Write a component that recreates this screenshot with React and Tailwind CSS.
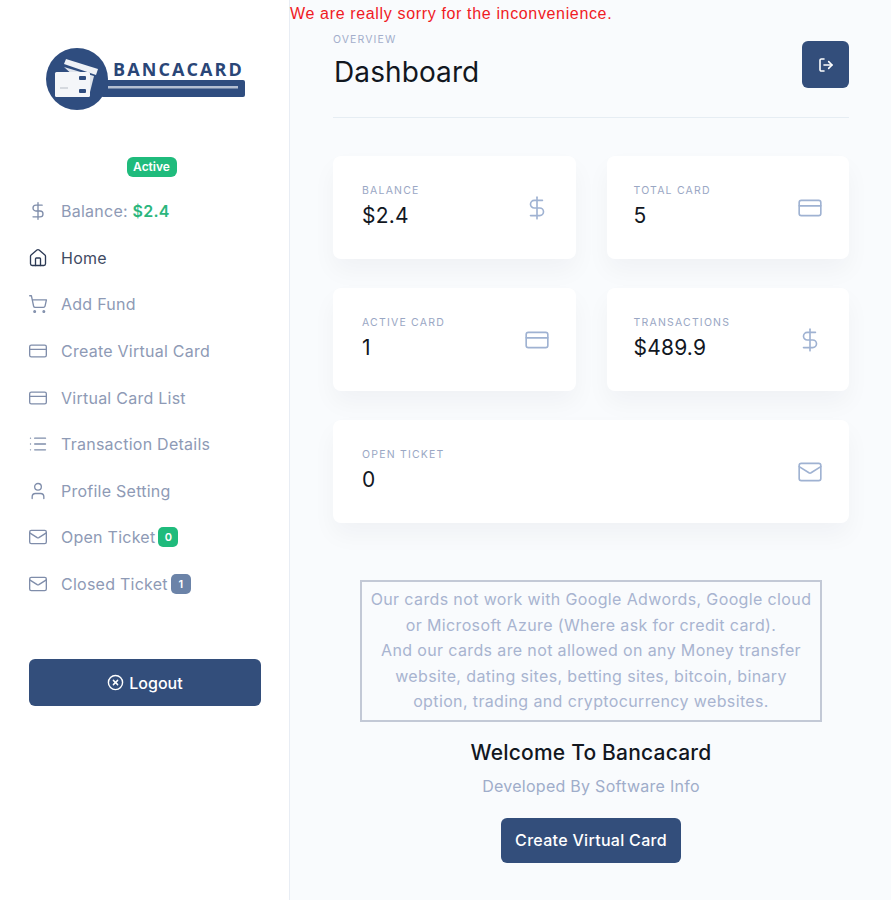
import React from "react";
import { Home, ShoppingCart, CreditCard, List, User, Mail, DollarSign, XCircle, LogOut } from "lucide-react";

function Logo() {
  return (
    <div className="relative w-[200px] h-[62px]">
      <svg width="200" height="62" viewBox="0 0 200 62" className="block">
        <rect x="55" y="32" width="144" height="17" rx="2" fill="#2f4d7f" />
        <rect x="62" y="38" width="130" height="2.5" fill="#b4bfd2" />
        <circle cx="31" cy="31" r="31" fill="#2f4d7f" />
        <path d="M20 11 L52 21 L50 27 L18 16 Z" fill="#eef1f6" />
        <path d="M18 19 L48 28 L43 48 L30 30 Z" fill="#dfe4ec" />
        <rect x="9" y="24" width="35" height="25" rx="1.5" fill="#f4f6f9" />
        <rect x="33" y="28" width="7" height="4" rx="1" fill="#2f4d7f" />
        <rect x="33" y="41" width="7" height="4" rx="1" fill="#2f4d7f" />
        <rect x="14" y="39" width="8" height="2" fill="#d5d9df" />
      </svg>
      <span className="absolute left-[67px] top-[10px] text-[18px] leading-[22px] font-bold tracking-[2.1px] text-[#2a4677] font-['Open_Sans',sans-serif]">BANCACARD</span>
    </div>
  );
}

function NavItem({ icon: Icon, active, children, badge, badgeClass }) {
  return (
    <div className={`flex items-center h-[46.6px] ${active ? "text-[#3f4b63]" : "text-[#8e9ab5]"}`}>
      <span className="w-[32px] flex -ml-[1px] mr-[1px]">
        <Icon size={20} strokeWidth={1.6} className={active ? "text-[#2c3a55]" : "text-[#7f8daa]"} />
      </span>
      <span className="text-[16px] leading-6 tracking-[0.25px]">{children}</span>
      {badge != null && (
        <span className={`ml-[3px] w-[20px] h-[20px] rounded-[5px] flex items-center justify-center text-[11px] font-semibold text-white ${badgeClass}`}>{badge}</span>
      )}
    </div>
  );
}

function StatCard({ label, value, icon: Icon, className = "" }) {
  return (
    <div className={`bg-white rounded-[8px] h-[103px] pr-[26px] pt-[27px] flex justify-between shadow-[0_12px_24px_rgba(18,38,63,0.04)] ${className}`}>
      <div>
        <div className="text-[10.5px] leading-[14px] tracking-[1.2px] text-[#9aa7c4] uppercase mt-[1px]">{label}</div>
        <div className="text-[21px] leading-[26px] tracking-[0.2px] text-[#12171f] mt-[5px]">{value}</div>
      </div>
      <Icon size={26} strokeWidth={1.5} className="text-[#9fb2d2] mt-[12px]" />
    </div>
  );
}

export default function App() {
  return (
    <div className="flex w-[891px] h-[900px] overflow-hidden bg-[#f9fbfd] font-['Inter',sans-serif]">
      <aside className="w-[290px] h-full shrink-0 bg-white border-r border-[#e8edf4] pl-[29px] pr-[28px] flex flex-col">
        <div className="pt-[48px] pl-[17px]"><Logo /></div>
        <div className="mt-[47px] flex justify-center pl-[13px]">
          <span className="h-[20px] w-[50px] rounded-[6px] bg-[#1fbb7c] text-white text-[12px] font-semibold flex items-center justify-center">Active</span>
        </div>
        <div className="mt-[11px]">
          <div className="flex items-center h-[46.6px] text-[#8e9ab5]">
            <span className="w-[32px] flex -ml-[1px] mr-[1px]"><DollarSign size={20} strokeWidth={1.6} className="text-[#7f8daa]" /></span>
            <span className="text-[16px] leading-6 tracking-[0.25px]">Balance: <span className="text-[#2cb67d] font-semibold">$2.4</span></span>
          </div>
          <NavItem icon={Home} active>Home</NavItem>
          <NavItem icon={ShoppingCart}>Add Fund</NavItem>
          <NavItem icon={CreditCard}>Create Virtual Card</NavItem>
          <NavItem icon={CreditCard}>Virtual Card List</NavItem>
          <NavItem icon={List}>Transaction Details</NavItem>
          <NavItem icon={User}>Profile Setting</NavItem>
          <NavItem icon={Mail} badge="0" badgeClass="bg-[#1fbb7c]">Open Ticket</NavItem>
          <NavItem icon={Mail} badge="1" badgeClass="bg-[#6b83a8]">Closed Ticket</NavItem>
        </div>
        <button className="mt-[52px] h-[47px] w-full rounded-[6px] bg-[#334e7b] text-white text-[16px] font-medium flex items-center justify-center gap-[5px]">
          <XCircle size={17} strokeWidth={2} />
          Logout
        </button>
      </aside>

      <main className="flex-1 min-w-0 relative">
        <div className="absolute left-0 top-[4px] whitespace-nowrap text-[16px] leading-5 text-[#f01a24] font-['Liberation_Sans',sans-serif] tracking-[0.65px]">We are really sorry for the inconvenience.</div>
        <div className="pl-[43px] pr-[42px] pt-[33px]">
          <div className="flex justify-between border-b border-[#e6edf3] h-[85px]">
            <div>
              <div className="text-[10.5px] leading-[14px] tracking-[1.1px] text-[#a3aecb] uppercase">Overview</div>
              <div className="text-[28px] leading-[36px] tracking-[0.1px] text-[#12171f] mt-[7px] pl-[1px]">Dashboard</div>
            </div>
            <button className="w-[47px] h-[47px] mt-[8px] rounded-[6px] bg-[#334e7b] text-white flex items-center justify-center">
              <LogOut size={16} strokeWidth={2.4} />
            </button>
          </div>

          <div className="grid grid-cols-2 gap-x-[31px] gap-y-[29px] mt-[38px]">
            <StatCard label="Balance" value="$2.4" icon={DollarSign} className="pl-[29px]" />
            <StatCard label="Total Card" value="5" icon={CreditCard} className="pl-[27px]" />
            <StatCard label="Active Card" value="1" icon={CreditCard} className="pl-[29px]" />
            <StatCard label="Transactions" value="$489.9" icon={DollarSign} className="pl-[27px]" />
            <StatCard label="Open Ticket" value="0" icon={Mail} className="col-span-2 pl-[29px]" />
          </div>

          <div className="mt-[57px] mx-[27px] border-2 border-[#c3c9d6] py-[5px] px-1 text-center text-[16px] leading-[25.5px] tracking-[0.37px] text-[#a8b4d0]">
            Our cards not work with Google Adwords, Google cloud or Microsoft Azure (Where ask for credit card).<br />
            And our cards are not allowed on any Money transfer website, dating sites, betting sites, bitcoin, binary option, trading and cryptocurrency websites.
          </div>

          <div className="mt-[17px] text-center text-[21px] leading-[28px] tracking-[0.2px] font-medium text-[#12171f]">Welcome To Bancacard</div>
          <div className="mt-[7px] text-center text-[16px] leading-6 tracking-[0.27px] text-[#9fadca]">Developed By Software Info</div>
          <div className="mt-[20px] flex justify-center">
            <button className="h-[45px] w-[180px] rounded-[6px] bg-[#334e7b] text-white text-[16px] tracking-[0.3px] font-medium">Create Virtual Card</button>
          </div>
        </div>
      </main>
    </div>
  );
}
